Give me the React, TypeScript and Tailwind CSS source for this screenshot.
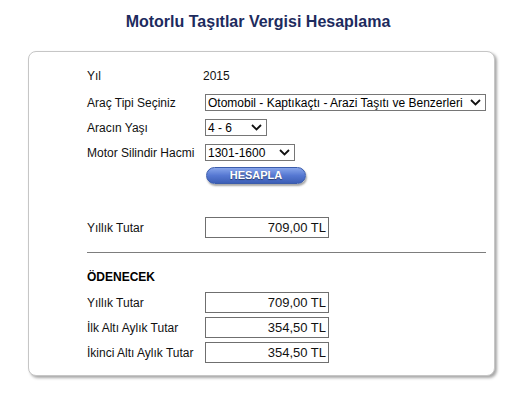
import React from "react";

const Chevron = () => (
  <svg width="11" height="7" viewBox="0 0 11 7" className="shrink-0">
    <path d="M1 1 L5.5 5.5 L10 1" fill="none" stroke="#111" strokeWidth="1.8" />
  </svg>
);

function FakeSelect({ value, w }: { value: string; w: string }) {
  return (
    <div
      className={`${w} h-[17px] border border-[#767676] bg-white flex items-center justify-between pl-[2px] pr-[4px] text-[12px] text-black leading-none`}
    >
      <span className="whitespace-nowrap">{value}</span>
      <Chevron />
    </div>
  );
}

function Row({ label, children, cls }: { label: string; children: React.ReactNode; cls?: string }) {
  return (
    <div className={`flex items-center ${cls ?? ""}`}>
      <div className="w-[118px] shrink-0 text-[12px] leading-[14px] text-[#111] whitespace-nowrap">{label}</div>
      {children}
    </div>
  );
}

function Amount({ v }: { v: string }) {
  return (
    <div className="w-[124px] h-[21px] border border-[#6f6f6f] bg-white flex items-center justify-end pr-[2px] text-[13px] text-[#111] leading-none">
      {v}
    </div>
  );
}

export default function App() {
  return (
    <div
      className="w-[532px] h-[396px] bg-white"
      style={{ fontFamily: '"Liberation Sans", Arial, sans-serif' }}
    >
      <div className="w-[516px] pt-[12px] text-center text-[16px] leading-[20px] font-bold text-[#1d2b5e]">
        Motorlu Taşıtlar Vergisi Hesaplama
      </div>
      <div className="ml-[28px] mt-[19px] w-[467px] h-[325px] border border-[#c6c6c6] rounded-[8px] bg-white shadow-[2px_2px_3px_rgba(0,0,0,0.35)] pt-[15px] pl-[58px] pr-[8px]">
        <Row label="Yıl" cls="h-[17px]">
          <span className="text-[12px] leading-[14px] text-[#111] -ml-[2px]">2015</span>
        </Row>
        <Row label="Araç Tipi Seçiniz" cls="h-[17px] mt-[10px]">
          <FakeSelect value="Otomobil - Kaptıkaçtı - Arazi Taşıtı ve Benzerleri" w="w-[282px]" />
        </Row>
        <Row label="Aracın Yaşı" cls="h-[17px] mt-[8px]">
          <FakeSelect value="4 - 6" w="w-[62px]" />
        </Row>
        <Row label="Motor Silindir Hacmi" cls="h-[17px] mt-[8px]">
          <FakeSelect value="1301-1600" w="w-[90px]" />
        </Row>
        <div className="mt-[6px] ml-[119px]">
          <div className="w-[100px] h-[17px] rounded-full border border-[#3b5cab] bg-gradient-to-b from-[#88a5ea] via-[#5678d2] to-[#3d5fb6] shadow-[1px_2px_2px_rgba(0,0,0,0.35)] flex items-center justify-center text-white font-bold text-[11px] leading-none [text-shadow:0_1px_1px_rgba(0,0,0,0.45)]">
            HESAPLA
          </div>
        </div>
        <Row label="Yıllık Tutar" cls="h-[21px] mt-[33px]">
          <Amount v="709,00 TL" />
        </Row>
        <div className="mt-[14px] h-px bg-[#7d7d7d]" />
        <div className="mt-[15px] h-[17px] flex items-center text-[12px] leading-[14px] font-bold text-black">ÖDENECEK</div>
        <Row label="Yıllık Tutar" cls="h-[21px] mt-[7px]">
          <Amount v="709,00 TL" />
        </Row>
        <Row label="İlk Altı Aylık Tutar" cls="h-[21px] mt-[4px]">
          <Amount v="354,50 TL" />
        </Row>
        <Row label="İkinci Altı Aylık Tutar" cls="h-[21px] mt-[4px]">
          <Amount v="354,50 TL" />
        </Row>
      </div>
    </div>
  );
}
